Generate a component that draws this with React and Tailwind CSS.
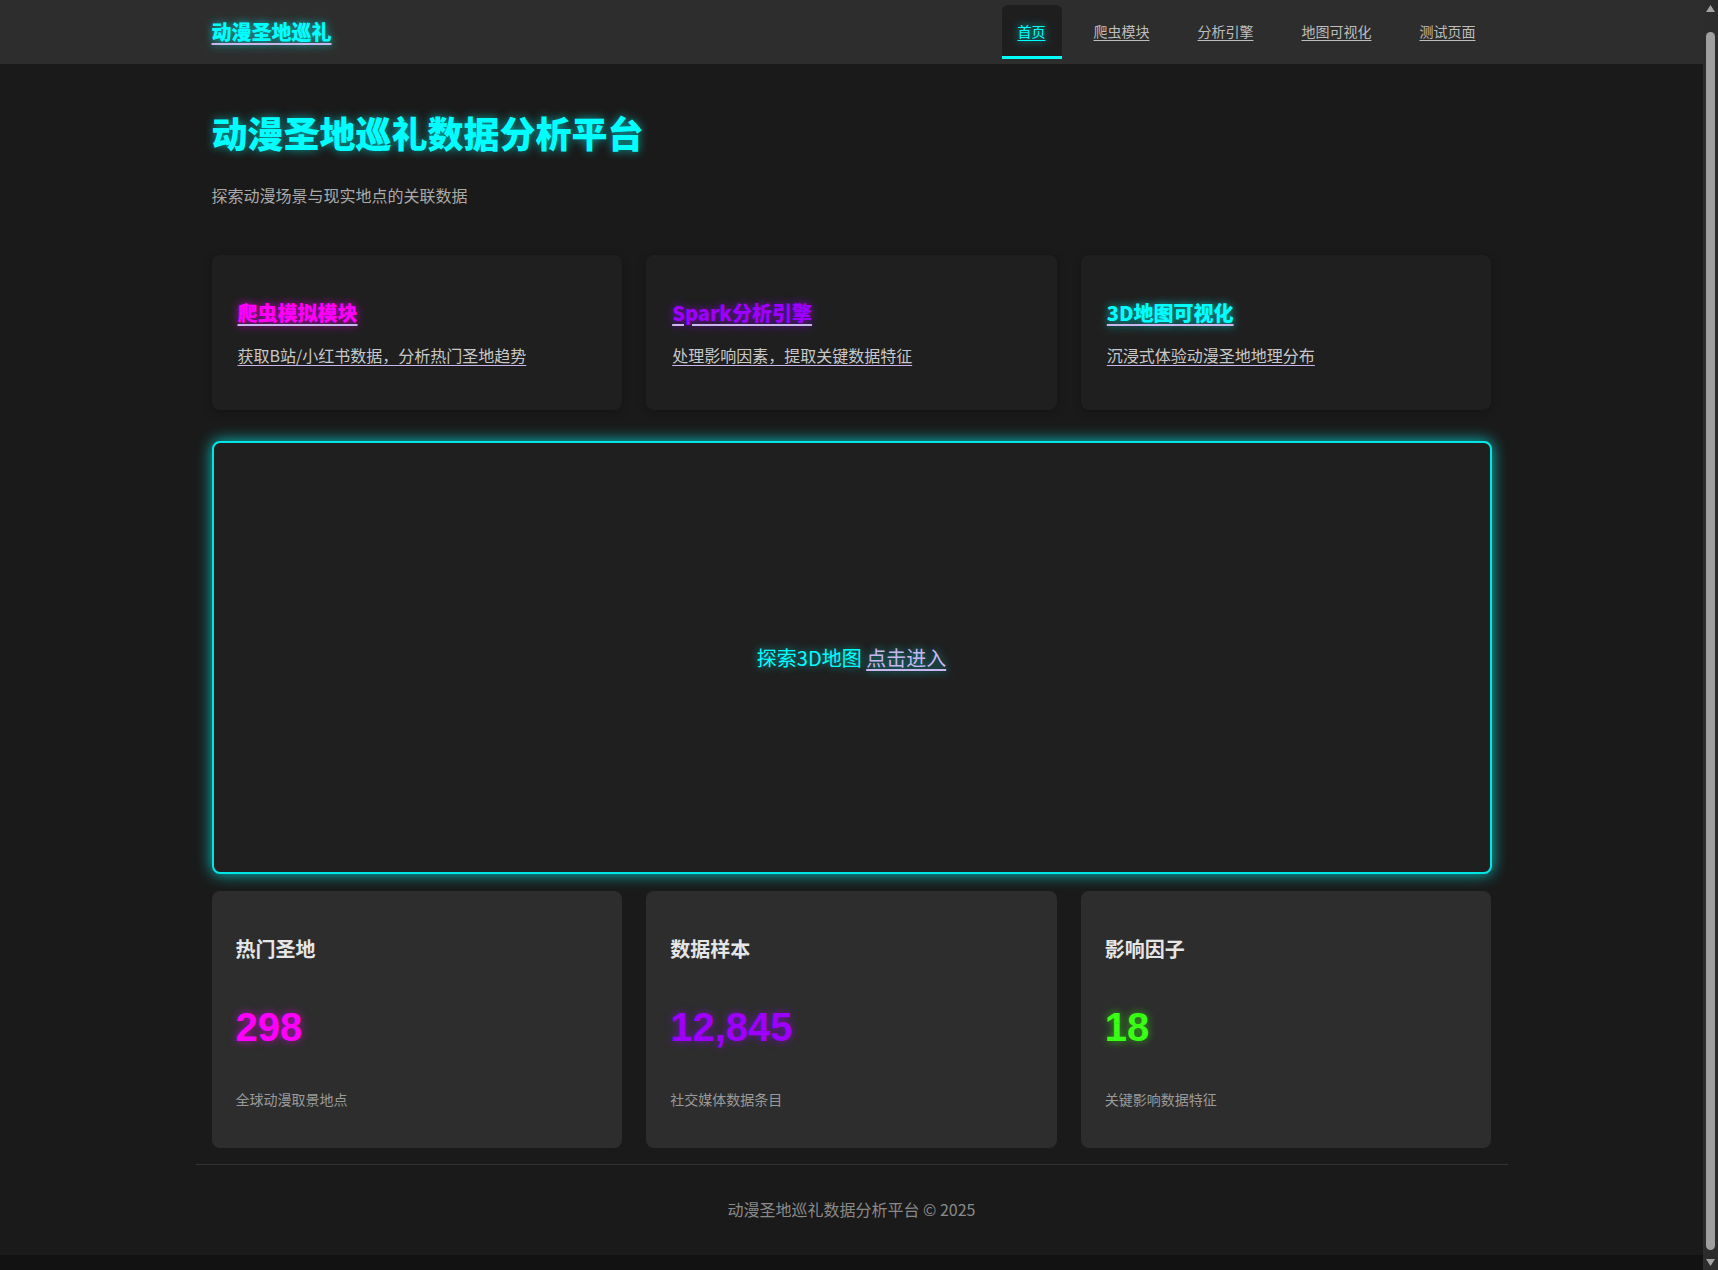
import React from "react";

function NavItem({ label, active }) {
  if (active) {
    return (
      <div className="relative h-[54px] px-4 flex items-center pb-[2px] rounded-md bg-[#1e1e1e]">
        <span className="text-[14px] text-[#00ffff] underline decoration-[#00ffff] underline-offset-[3px] [text-shadow:0_0_8px_rgba(0,255,255,0.8)]">
          {label}
        </span>
        <div className="absolute left-0 right-0 bottom-0 h-[3px] bg-[#00ffff]" />
      </div>
    );
  }
  return (
    <div className="h-[54px] px-4 flex items-center pb-[2px]">
      <span className="text-[14px] text-[#bdbdbd] underline decoration-[#bdbdbd] underline-offset-[3px]">
        {label}
      </span>
    </div>
  );
}

function FeatureCard({ title, desc, titleClass }) {
  return (
    <div className="h-[155px] rounded-lg bg-[#1f1f1f] pl-[26px] pr-6 pt-[44px] shadow-[0_2px_8px_rgba(0,0,0,0.25)]">
      <div
        className={
          "text-[20px] leading-7 font-extrabold underline decoration-[#c9b6ea] underline-offset-[3px] " +
          titleClass
        }
      >
        {title}
      </div>
      <div className="mt-[16px] text-[16px] leading-6 text-[#c8c8c8] underline decoration-[#c9b6ea] underline-offset-[3px]">
        {desc}
      </div>
    </div>
  );
}

function StatCard({ title, value, desc, valueClass }) {
  return (
    <div className="h-[257px] rounded-lg bg-[#2d2d2d] px-6 pt-[44px]">
      <div className="text-[20px] leading-7 font-bold text-[#e6e6e6]">{title}</div>
      <div
        className={
          "mt-[44px] text-[40px] leading-[40px] font-bold [font-family:'Liberation_Sans',sans-serif] " +
          valueClass
        }
      >
        {value}
      </div>
      <div className="mt-[42px] text-[14px] leading-5 text-[#9a9a9a]">{desc}</div>
    </div>
  );
}

export default function App() {
  return (
    <div className="flex h-[1270px] overflow-hidden bg-[#121212] [font-family:'Noto_Sans_CJK_SC','Noto_Sans',sans-serif]">
      <div className="w-[1703px] shrink-0">
        <div className="bg-[#1a1a1a] h-[1255px]">
          <header className="h-16 bg-[#2d2d2d]">
            <div className="w-[1280px] mx-auto h-full flex items-center justify-between">
              <div className="text-[20px] font-extrabold text-[#00ffff] underline decoration-[#c9b6ea] underline-offset-[3px] [text-shadow:0_0_8px_rgba(0,255,255,0.7)]">
                动漫圣地巡礼
              </div>
              <nav className="flex gap-4">
                <NavItem label="首页" active />
                <NavItem label="爬虫模块" />
                <NavItem label="分析引擎" />
                <NavItem label="地图可视化" />
                <NavItem label="测试页面" />
              </nav>
            </div>
          </header>

          <div className="w-[1312px] mx-auto">
            <div className="px-4">
              <h1 className="pt-[46px] text-[36px] leading-[44px] font-extrabold text-[#00ffff] [text-shadow:0_0_10px_rgba(0,255,255,0.6)]">
                动漫圣地巡礼数据分析平台
              </h1>
              <p className="mt-[29px] text-[16px] leading-6 text-[#aaaaaa]">
                探索动漫场景与现实地点的关联数据
              </p>

              <div className="mt-12 grid grid-cols-3 gap-6">
                <FeatureCard
                  title="爬虫模拟模块"
                  desc="获取B站/小红书数据，分析热门圣地趋势"
                  titleClass="text-[#ff00ff] [text-shadow:0_0_8px_rgba(255,0,255,0.7)]"
                />
                <FeatureCard
                  title="Spark分析引擎"
                  desc="处理影响因素，提取关键数据特征"
                  titleClass="text-[#9d00ff] [text-shadow:0_0_8px_rgba(157,0,255,0.7)]"
                />
                <FeatureCard
                  title="3D地图可视化"
                  desc="沉浸式体验动漫圣地地理分布"
                  titleClass="text-[#00ffff] [text-shadow:0_0_8px_rgba(0,255,255,0.7)]"
                />
              </div>

              <div className="mt-[31px] h-[433px] rounded-lg border-2 border-[#00e6e6] bg-[#1f1f1f] shadow-[0_0_15px_rgba(0,255,255,0.75)] flex items-center justify-center">
                <span className="text-[20px] text-[#00ffff] [text-shadow:0_0_8px_rgba(0,255,255,0.6)]">
                  探索3D地图{" "}
                  <span className="text-[#c8b6f0] underline decoration-[#c8b6f0] underline-offset-[3px]">
                    点击进入
                  </span>
                </span>
              </div>

              <div className="mt-[17px] grid grid-cols-3 gap-6">
                <StatCard
                  title="热门圣地"
                  value="298"
                  desc="全球动漫取景地点"
                  valueClass="text-[#ff00ff] [text-shadow:0_0_8px_rgba(255,0,255,0.6)]"
                />
                <StatCard
                  title="数据样本"
                  value="12,845"
                  desc="社交媒体数据条目"
                  valueClass="text-[#9d00ff] [text-shadow:0_0_8px_rgba(157,0,255,0.6)]"
                />
                <StatCard
                  title="影响因子"
                  value="18"
                  desc="关键影响数据特征"
                  valueClass="text-[#39ff14] [text-shadow:0_0_8px_rgba(57,255,20,0.6)]"
                />
              </div>
            </div>

            <footer className="mt-4 border-t border-[#333333] py-8 text-center text-[16px] leading-6 text-[#8a8a8a]">
              动漫圣地巡礼数据分析平台 © 2025
            </footer>
          </div>
        </div>
      </div>

      <div className="w-[15px] shrink-0 bg-[#2c2c2c] flex flex-col items-center">
        <svg width="9" height="7" viewBox="0 0 9 7" className="mt-[5px]">
          <polygon points="4.5,0 9,7 0,7" fill="#a3a3a3" />
        </svg>
        <div className="mt-[20px] h-[1218px] w-[9px] rounded-full bg-[#9f9f9f]" />
        <svg width="9" height="7" viewBox="0 0 9 7" className="mt-[9px]">
          <polygon points="0,0 9,0 4.5,7" fill="#a3a3a3" />
        </svg>
      </div>
    </div>
  );
}
